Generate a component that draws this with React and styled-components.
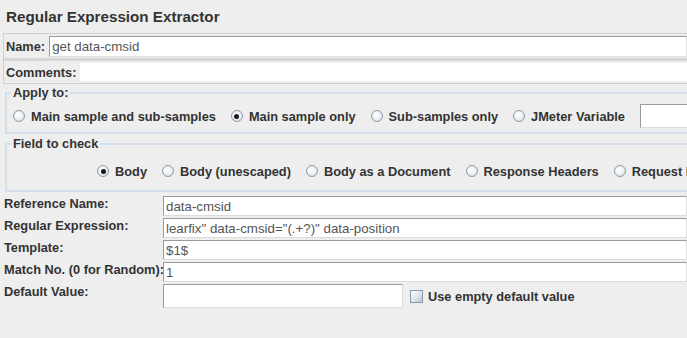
import styled, { createGlobalStyle } from 'styled-components'

const GlobalStyle = createGlobalStyle`
    html, body {
        margin: 0;
        padding: 0;
        background: #eeeeee;
    }
`

const Page = styled.div`
    width: 687px;
    height: 338px;
    overflow: hidden;
    background: #eeeeee;
    font-family: "Liberation Sans", Arial, sans-serif;
    font-size: 12.8px;
    color: #333333;
    white-space: nowrap;
`

const Title = styled.div`
    height: 33px;
    box-sizing: border-box;
    padding: 8px 0 0 6px;
    font-size: 15.2px;
    font-weight: bold;
    color: #333333;
`

const NamePanel = styled.div`
    margin-left: 3px;
    border: 1px solid #d0d0d0;
    border-right: none;
    display: flex;
    flex-direction: column;
`

const InlineRow = styled.div`
    display: flex;
    align-items: center;
    height: ${p => p.$h || 23}px;
    border-bottom: ${p => p.$divider ? '3px solid #d6d6d6' : 'none'};
`

const InlineLabel = styled.span`
    font-weight: bold;
    padding: 0 4px 0 2px;
`

const TextField = styled.div`
    flex: ${p => p.$w ? 'none' : '1'};
    width: ${p => p.$w ? `${p.$w}px` : 'auto'};
    height: ${p => p.$h || 20}px;
    box-sizing: border-box;
    background: #ffffff;
    border-top: 1px solid ${p => p.$plain ? '#ffffff' : '#9a9a9a'};
    border-left: 1px solid ${p => p.$plain ? '#ffffff' : '#9a9a9a'};
    border-bottom: 1px solid ${p => p.$plain ? '#ffffff' : '#dcdcdc'};
    border-right: 1px solid ${p => p.$plain ? '#ffffff' : '#dcdcdc'};
    padding: 0 2px;
    display: flex;
    align-items: center;
    color: #555555;
    font-size: 13.3px;
    overflow: hidden;
`

const Group = styled.fieldset`
    margin: ${p => p.$mt || 0}px 0 0 5px;
    padding: 0;
    border: 2px solid #d2deea;
    border-right: none;
    min-width: 0;
    height: ${p => p.$h}px;
    box-sizing: border-box;
`

const Legend = styled.legend`
    font-weight: bold;
    padding: 0 2px;
    margin-left: 4px;
`

const RadioRow = styled.div`
    display: flex;
    align-items: center;
    height: ${p => p.$h || 24}px;
    padding-left: ${p => p.$pl || 0}px;
    padding-top: ${p => p.$pt || 0}px;
`

const Option = styled.label`
    display: flex;
    align-items: center;
    font-weight: bold;
    margin-right: 15px;
    color: #333333;
`

const RadioDot = styled.span`
    width: 12px;
    height: 12px;
    box-sizing: border-box;
    border-radius: 50%;
    border: 1px solid #8c9aa8;
    background: radial-gradient(circle at 40% 35%, #ffffff 0%, #e6ecf2 60%, #c6d0da 100%);
    margin-right: 6px;
    display: flex;
    align-items: center;
    justify-content: center;
    &::after {
        content: '';
        display: ${p => p.$on ? 'block' : 'none'};
        width: 5px;
        height: 5px;
        border-radius: 50%;
        background: #1a1a1a;
    }
`

const Check = styled.span`
    width: 13px;
    height: 13px;
    box-sizing: border-box;
    border: 1px solid #8c9aa8;
    background: linear-gradient(135deg, #ffffff 0%, #dbe3ec 55%, #b9c6d3 100%);
    margin: 0 5px 0 7px;
`

const Form = styled.div`
    display: grid;
    grid-template-columns: 159px 1fr;
    grid-auto-rows: 21px;
    row-gap: 1px;
    margin-top: 4px;
    padding-left: 4px;
`

const FormLabel = styled.div`
    font-weight: bold;
    padding-top: 0;
`

const FormCell = styled.div`
    display: flex;
    align-items: flex-start;
`

const CheckOption = styled(Option).attrs({ as: 'span' })`
    align-self: center;
    margin-top: 3px;
`

const applyTo = [
    { label: 'Main sample and sub-samples' },
    { label: 'Main sample only', on: true },
    { label: 'Sub-samples only' },
    { label: 'JMeter Variable' },
]

const fields = [
    { label: 'Body', on: true },
    { label: 'Body (unescaped)' },
    { label: 'Body as a Document' },
    { label: 'Response Headers' },
    { label: 'Request Headers' },
]

const rows = [
    { label: 'Reference Name:', value: 'data-cmsid' },
    { label: 'Regular Expression:', value: 'learfix" data-cmsid="(.+?)" data-position' },
    { label: 'Template:', value: '$1$' },
    { label: 'Match No. (0 for Random):', value: '1' },
]

function App() {
    return (
        <Page>
            <GlobalStyle />
            <Title>Regular Expression Extractor</Title>

            <NamePanel>
                <InlineRow $h={24} $divider>
                    <InlineLabel>Name:</InlineLabel>
                    <TextField $h={21}>get data-cmsid</TextField>
                </InlineRow>
                <InlineRow $h={22}>
                    <InlineLabel>Comments:</InlineLabel>
                    <TextField $h={18} $plain></TextField>
                </InlineRow>
            </NamePanel>

            <Group $h={49} $mt={1}>
                <Legend>Apply to:</Legend>
                <RadioRow $h={26} $pl={6} $pt={3}>
                    {applyTo.map(o => (
                        <Option key={o.label}>
                            <RadioDot $on={o.on} />
                            {o.label}
                        </Option>
                    ))}
                    <TextField $w={60} $h={24} />
                </RadioRow>
            </Group>

            <Group $h={56} $mt={2}>
                <Legend>Field to check</Legend>
                <RadioRow $h={30} $pl={90} $pt={5}>
                    {fields.map(o => (
                        <Option key={o.label}>
                            <RadioDot $on={o.on} />
                            {o.label}
                        </Option>
                    ))}
                </RadioRow>
            </Group>

            <Form>
                {rows.flatMap(r => [
                    <FormLabel key={r.label}>{r.label}</FormLabel>,
                    <FormCell key={r.label + '-v'}>
                        <TextField>{r.value}</TextField>
                    </FormCell>,
                ])}
                <FormLabel>Default Value:</FormLabel>
                <FormCell>
                    <TextField $w={240} $h={24} />
                    <CheckOption>
                        <Check />
                        Use empty default value
                    </CheckOption>
                </FormCell>
            </Form>
        </Page>
    )
}

export default App
